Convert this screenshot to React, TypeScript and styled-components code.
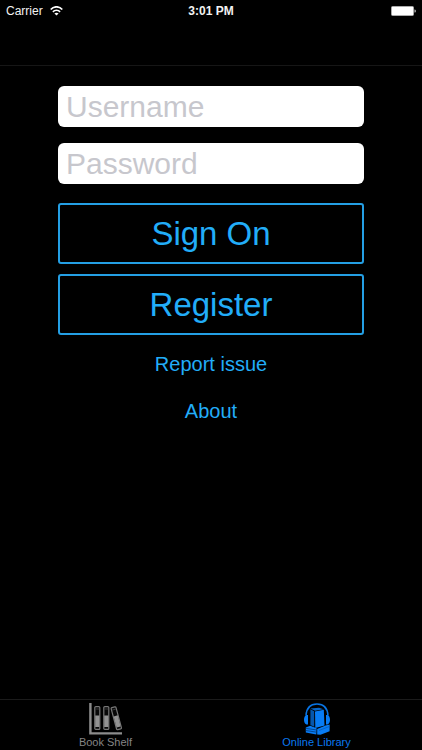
import React from "react";
import styled, { createGlobalStyle } from "styled-components";

const GlobalStyle = createGlobalStyle`
  * { box-sizing: border-box; }
  body {
    margin: 0;
    background: #000;
    font-family: "Liberation Sans", Arial, sans-serif;
  }
`;

const Screen = styled.div`
  display: flex;
  flex-direction: column;
  min-height: 100vh;
  background: #000;
`;

const TopBar = styled.header`
  height: 66px;
  border-bottom: 1px solid #161616;
`;

const StatusBar = styled.div`
  display: grid;
  grid-template-columns: 1fr auto 1fr;
  align-items: center;
  height: 22px;
  padding: 0 6px;
  color: #f2f2f2;
  font-size: 12px;
  line-height: 22px;
`;

const Carrier = styled.div`
  display: flex;
  align-items: center;
  gap: 7px;
`;

const Time = styled.time`
  font-weight: 700;
`;

const BatterySlot = styled.div`
  display: flex;
  justify-content: flex-end;
`;

const Main = styled.main`
  flex: 1;
  padding: 20px 58px;
`;

const Form = styled.form`
  display: flex;
  flex-direction: column;
`;

const Field = styled.input`
  width: 100%;
  height: 41px;
  margin-bottom: 16px;
  padding: 0 8px;
  border: 0;
  border-radius: 6px;
  background: #fff;
  color: #111;
  font-family: inherit;
  font-size: 30px;
  &::placeholder {
    color: #c7c7cd;
    opacity: 1;
  }
`;

const Actions = styled.div`
  display: grid;
  gap: 10px;
  margin-top: 3px;
`;

const OutlineButton = styled.button`
  height: 61px;
  padding: 0;
  border: 2px solid #249fe4;
  border-radius: 3px;
  background: transparent;
  color: #22adf8;
  font-family: inherit;
  font-size: 33px;
  line-height: 56px;
`;

const Links = styled.nav`
  display: flex;
  flex-direction: column;
  align-items: center;
  gap: 23px;
  margin-top: 17px;
`;

const TextLink = styled.a`
  color: #22adf8;
  font-size: 20px;
  line-height: 24px;
  text-decoration: none;
`;

const TabBar = styled.nav`
  display: grid;
  grid-template-columns: 1fr 1fr;
  height: 51px;
  border-top: 1px solid #1b1b1b;
`;

const Tab = styled.button<{ $active?: boolean }>`
  display: flex;
  flex-direction: column;
  align-items: center;
  padding: 3px 0 0;
  border: 0;
  background: transparent;
  color: ${(p) => (p.$active ? "#0a78f0" : "#858585")};
  font-family: inherit;
  font-size: 11px;
  line-height: 14px;
`;

const WifiIcon = () => (
  <svg width="13" height="10" viewBox="0 0 13 10" fill="none" stroke="#fff" strokeWidth="1.7" aria-hidden="true">
    <path d="M.7 3.5C4-.1 9-.1 12.3 3.5" />
    <path d="M2.9 5.8c2-2.1 5.2-2.1 7.2 0" />
    <path d="M6.5 9.6 4.4 7.5q2.1-1.7 4.2 0z" fill="#fff" stroke="none" />
  </svg>
);

const BatteryIcon = () => (
  <svg width="25" height="10" viewBox="0 0 25 10" role="img" aria-label="Battery full">
    <rect x=".5" y=".5" width="22" height="9" rx="1" fill="#fff" stroke="#aaa" />
    <path d="M23.5 3.5h.3q1 0 1 1.5t-1 1.5h-.3z" fill="#ccc" />
  </svg>
);

const Binder = ({ transform }: { transform: string }) => (
  <g transform={transform}>
    <rect x=".6" y=".6" width="5" height="22.8" rx="1" fill="#080808" stroke="#777" strokeWidth="1.2" />
    <rect x="1" y="9.5" width="4.2" height="11.5" fill="#929292" />
    <path d="M1.2 3h3.8" stroke="#444" strokeWidth=".8" />
  </g>
);

const ShelfIcon = () => (
  <svg width="33" height="32" viewBox="0 0 33 32" fill="none" aria-hidden="true">
    <path d="M1.4 0v30.4H33" stroke="#8c8c8c" strokeWidth="2.4" />
    <Binder transform="translate(5.2 3)" />
    <Binder transform="translate(14.2 3)" />
    <Binder transform="translate(21.2 4.5) rotate(-15)" />
  </svg>
);

const AudioBooksIcon = () => (
  <svg width="28" height="32" viewBox="0 0 28 32" fill="none" aria-hidden="true">
    <path d="M3 12.5C3.5 5 7.5 1 14 1S24.5 5 25 12.5" stroke="#0874e4" strokeWidth="1.5" />
    <path d="M5 12v9.5H3.4C1.8 20.7 1 19 1 16.8s.8-4 2.4-4.8zM23 12v9.5h1.6c1.6-.8 2.4-2.5 2.4-4.7s-.8-4-2.4-4.8z" fill="#087cf5" />
    <path d="M7.5 5.6 16 4.8l4.5 1.5-8.4 1.5z" fill="#0867c9" />
    <path d="m7.4 6.3 3.8 1.9v15.6L7.4 22z" fill="#0657ad" />
    <path d="m12 8.5 8.8-1.7.7 15.6-9.2 2.6z" fill="#087cf5" />
    <path d="m2.8 24.6 4.4-1.8 6.4 2.4-.3 6.3-10.5-1.9z" fill="#087cf5" />
    <path d="m14.2 26 8.3-3.6 4.1-1v6.8l-9.1 3.6-3.3-.2z" fill="#087cf5" />
    <path d="m2.8 25.3 10.8 1.7M2.8 27.5l10.8 1.7" stroke="#00387a" strokeWidth=".8" />
    <path d="m16 27.5 10.6-4.1" stroke="#0758b0" strokeWidth=".7" />
  </svg>
);

export default function App() {
  return (
    <>
      <GlobalStyle />
      <Screen>
        <TopBar>
          <StatusBar>
            <Carrier>
              Carrier
              <WifiIcon />
            </Carrier>
            <Time>3:01 PM</Time>
            <BatterySlot>
              <BatteryIcon />
            </BatterySlot>
          </StatusBar>
        </TopBar>
        <Main>
          <Form onSubmit={(e) => e.preventDefault()}>
            <Field type="text" placeholder="Username" aria-label="Username" />
            <Field type="password" placeholder="Password" aria-label="Password" />
            <Actions>
              <OutlineButton type="submit">Sign On</OutlineButton>
              <OutlineButton type="button">Register</OutlineButton>
            </Actions>
          </Form>
          <Links>
            <TextLink href="#report">Report issue</TextLink>
            <TextLink href="#about">About</TextLink>
          </Links>
        </Main>
        <TabBar>
          <Tab type="button">
            <ShelfIcon />
            Book Shelf
          </Tab>
          <Tab type="button" $active aria-current="page">
            <AudioBooksIcon />
            Online Library
          </Tab>
        </TabBar>
      </Screen>
    </>
  );
}
